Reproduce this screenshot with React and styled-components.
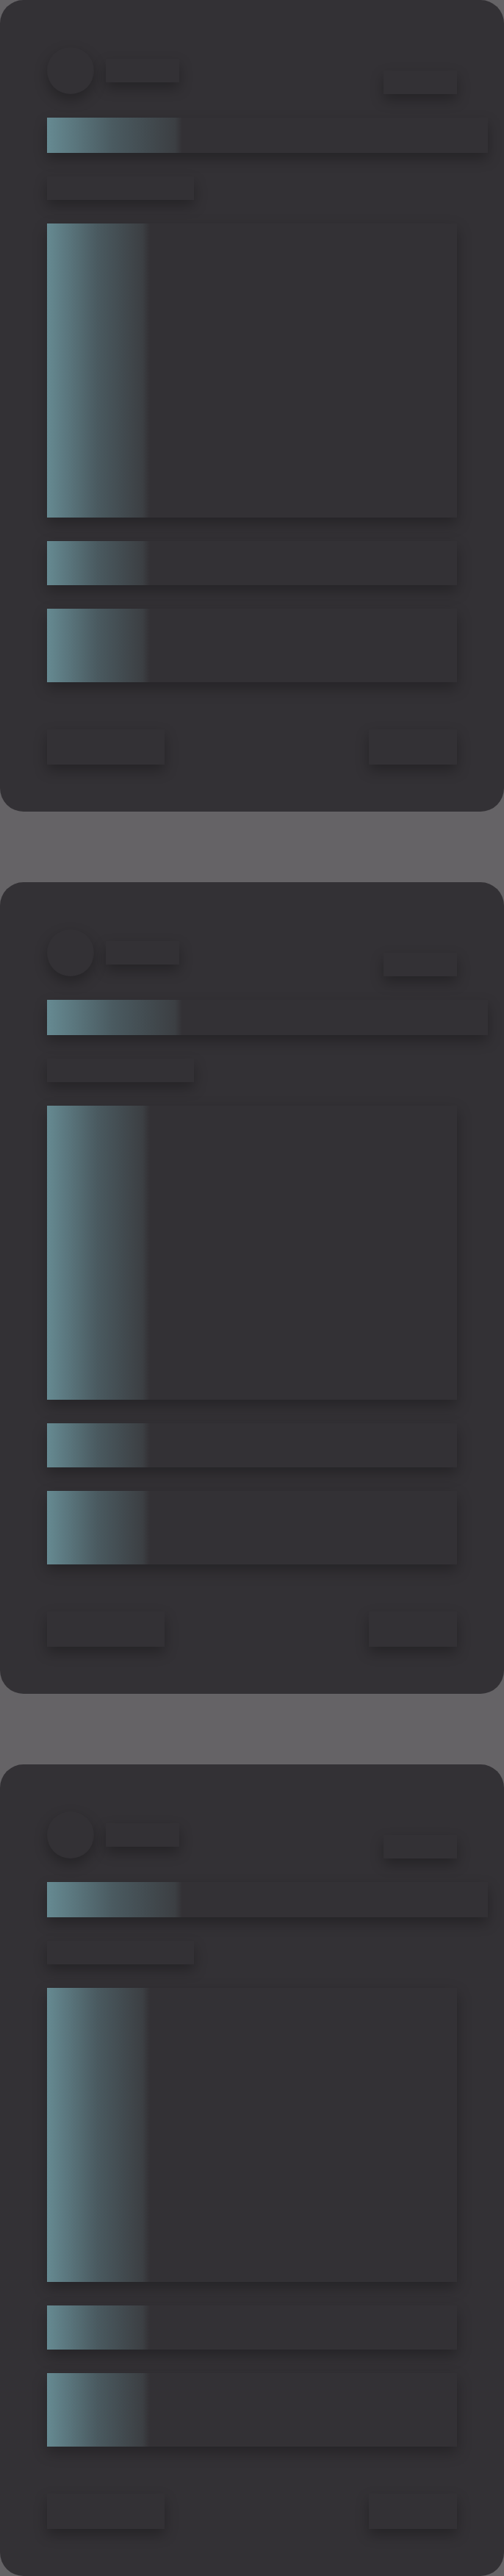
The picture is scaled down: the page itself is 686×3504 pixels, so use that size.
import React from 'react';
import styled, { createGlobalStyle } from 'styled-components';

const GlobalStyle = createGlobalStyle`
  html, body {
    margin: 0;
    padding: 0;
    background: #656366;
    font-family: "Liberation Sans", Arial, sans-serif;
  }
`;

const CARD = '#333135';
const TEAL = '#668a92';

//skeleton card list
const App = () => {
  return (
    <>
      <GlobalStyle />
      <List>
        {[0, 1, 2].map((i) => (
          <Card key={i}>
            <Header>
              <Author>
                <Avatar />
                <Block $w={100} $h={32} />
              </Author>
              <Block $w={100} $h={32} />
            </Header>

            <Block $w={600} $h={48} $shine={180} />
            <Block $w={200} $h={32} />
            <Block $h={400} $shine={136} />
            <Block $h={60} $shine={136} />
            <Block $h={100} $shine={136} />

            <Footer>
              <Block $w={160} $h={48} />
              <Block $w={120} $h={48} />
            </Footer>
          </Card>
        ))}
      </List>
    </>
  );
};

export default App;


//styles
const List = styled.div`
  display: flex;
  flex-direction: column;
  gap: 96px;
`;

const Card = styled.section`
  box-sizing: border-box;
  width: 686px;
  height: 1104px;
  padding: 64px;
  border-radius: 32px;
  background: ${CARD};
  display: flex;
  flex-direction: column;
  gap: 32px;
`;

const Header = styled.div`
  display: flex;
  justify-content: space-between;
  align-items: flex-end;
`;

const Author = styled.div`
  display: flex;
  align-items: center;
  gap: 16px;
`;

const Avatar = styled.div`
  width: 64px;
  height: 64px;
  border-radius: 50%;
  background: ${CARD};
  box-shadow: 0 8px 18px rgba(0, 0, 0, 0.28);
`;

const Block = styled.div`
  flex: none;
  width: ${(p) => (p.$w ? `${p.$w}px` : '100%')};
  height: ${(p) => p.$h}px;
  background: ${(p) =>
    p.$shine
      ? `linear-gradient(90deg, ${TEAL} 0px, #4a5a60 ${p.$shine * 0.5}px, #3c3f43 ${p.$shine - 6}px, ${CARD} ${p.$shine + 4}px)`
      : CARD};
  box-shadow: 0 8px 18px rgba(0, 0, 0, 0.28);
`;

const Footer = styled.div`
  display: flex;
  justify-content: space-between;
  margin-top: 32px;
`;
